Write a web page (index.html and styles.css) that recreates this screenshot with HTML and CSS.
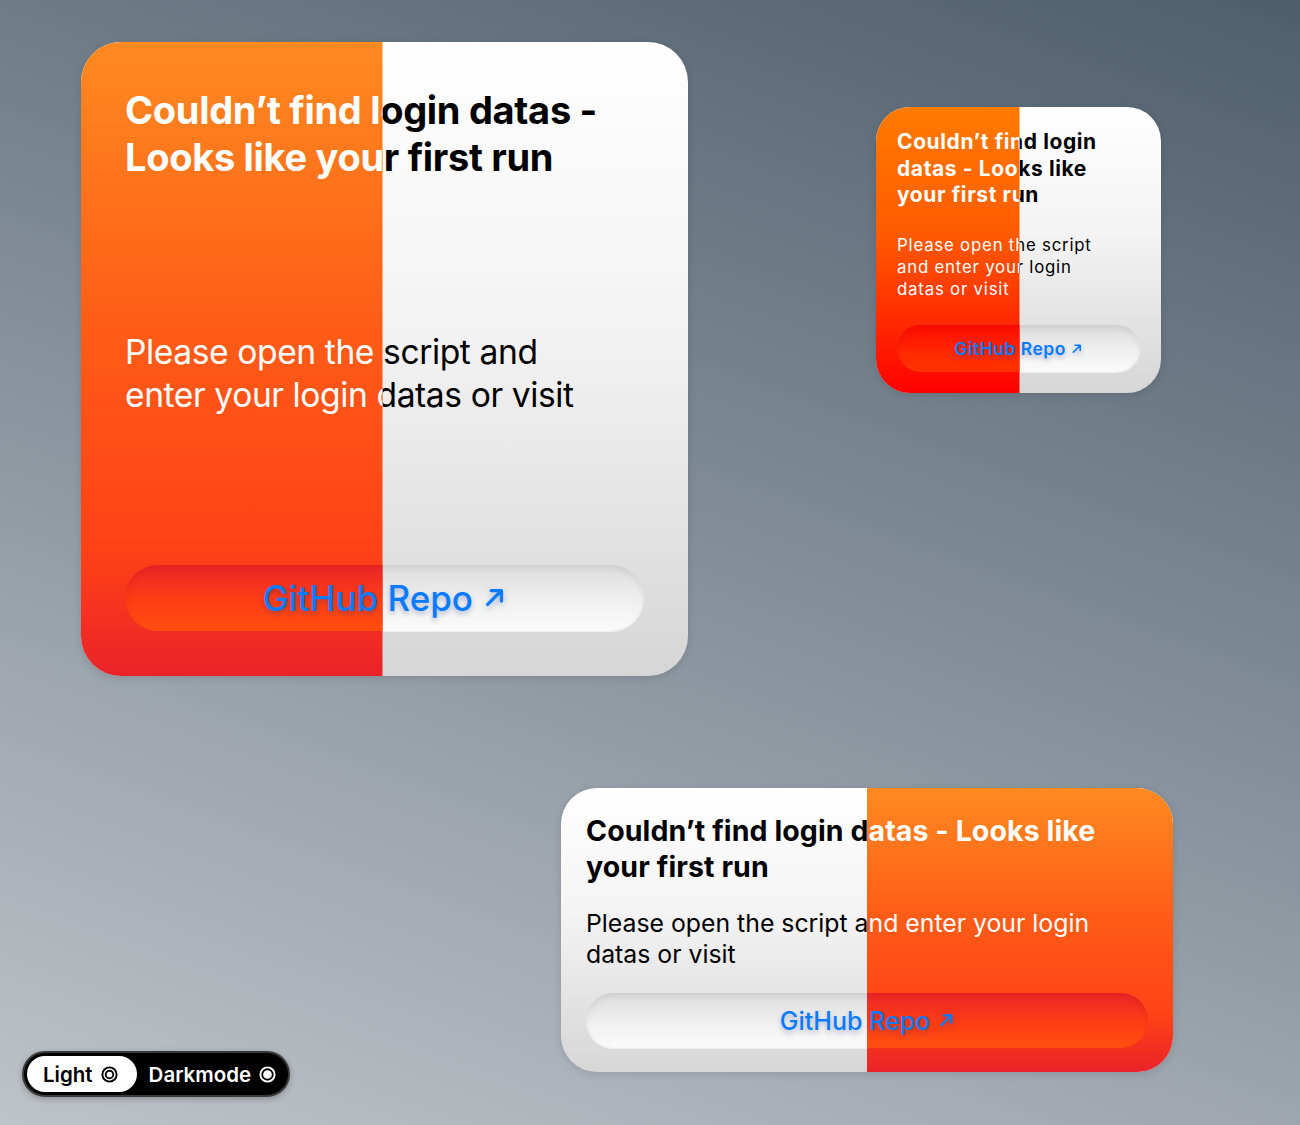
FILE: index.html
```html
<!DOCTYPE html>
<html lang="en">
<head>
<meta charset="utf-8">
<title>Widget preview</title>
<link rel="stylesheet" href="styles.css">
</head>
<body>
<div class="canvas">
  <div class="row row-top">
    <div class="widget widget-lg split-left">
      <div class="face face-light">
        <h1 class="title">Couldn’t find login datas - Looks like your first run</h1>
        <p class="body">Please open the script and enter your login datas or visit</p>
        <div class="btn"><span class="btn-label">GitHub Repo <svg class="arrow" viewBox="0 0 20 20"><path d="M4 16 L16 4 M7 4 H16 V13"/></svg></span></div>
      </div>
      <div class="face face-dark">
        <h1 class="title">Couldn’t find login datas - Looks like your first run</h1>
        <p class="body">Please open the script and enter your login datas or visit</p>
        <div class="btn"><span class="btn-label">GitHub Repo <svg class="arrow" viewBox="0 0 20 20"><path d="M4 16 L16 4 M7 4 H16 V13"/></svg></span></div>
      </div>
    </div>
    <div class="widget widget-sm split-left">
      <div class="face face-light">
        <h1 class="title">Couldn’t find login datas - Looks like your first run</h1>
        <p class="body">Please open the script and enter your login datas or visit</p>
        <div class="btn"><span class="btn-label">GitHub Repo <svg class="arrow" viewBox="0 0 20 20"><path d="M4 16 L16 4 M7 4 H16 V13"/></svg></span></div>
      </div>
      <div class="face face-dark">
        <h1 class="title">Couldn’t find login datas - Looks like your first run</h1>
        <p class="body">Please open the script and enter your login datas or visit</p>
        <div class="btn"><span class="btn-label">GitHub Repo <svg class="arrow" viewBox="0 0 20 20"><path d="M4 16 L16 4 M7 4 H16 V13"/></svg></span></div>
      </div>
    </div>
  </div>
  <div class="row row-bottom">
    <div class="toggle">
      <span class="toggle-opt toggle-opt-active">Light <svg class="mode-icon" viewBox="0 0 20 20"><circle cx="10" cy="10" r="7.5" class="ring"/><circle cx="10" cy="10" r="4" class="ring"/></svg></span>
      <span class="toggle-opt">Darkmode <svg class="mode-icon" viewBox="0 0 20 20"><circle cx="10" cy="10" r="7.5" class="ring"/><circle cx="10" cy="10" r="4.6" class="dot"/></svg></span>
    </div>
    <div class="widget widget-md split-right">
      <div class="face face-light">
        <h1 class="title">Couldn’t find login datas - Looks like your first run</h1>
        <p class="body">Please open the script and enter your login datas or visit</p>
        <div class="btn"><span class="btn-label">GitHub Repo <svg class="arrow" viewBox="0 0 20 20"><path d="M4 16 L16 4 M7 4 H16 V13"/></svg></span></div>
      </div>
      <div class="face face-dark">
        <h1 class="title">Couldn’t find login datas - Looks like your first run</h1>
        <p class="body">Please open the script and enter your login datas or visit</p>
        <div class="btn"><span class="btn-label">GitHub Repo <svg class="arrow" viewBox="0 0 20 20"><path d="M4 16 L16 4 M7 4 H16 V13"/></svg></span></div>
      </div>
    </div>
  </div>
</div>
</body>
</html>
```

FILE: styles.css
```css
html, body {
  margin: 0;
  padding: 0;
}
body {
  width: 1300px;
  height: 1125px;
  overflow: hidden;
  font-family: Inter, "Noto Sans", "Liberation Sans", sans-serif;
  background: linear-gradient(200deg, #4f5e6d 0%, #7a8691 40%, #a3aab2 75%, #bec3c8 100%);
}
.canvas {
  display: flex;
  flex-direction: column;
  padding-top: 42px;
}
.row {
  display: flex;
}
.row-top {
  align-items: flex-start;
}
.row-bottom {
  align-items: flex-end;
  margin-top: 112px;
}

/* ---------- widget ---------- */
.widget {
  display: grid;
  overflow: hidden;
  box-shadow: 0 2px 8px rgba(0, 0, 0, 0.12);
}
.face {
  grid-area: 1 / 1;
  display: flex;
  flex-direction: column;
  justify-content: space-between;
  box-sizing: border-box;
}
.split-left .face-dark { clip-path: inset(0 50% 0 0); }
.split-right .face-dark { clip-path: inset(0 0 0 50%); }
.widget-lg .face-dark { clip-path: inset(0 calc(50% + 2px) 0 0); }
.widget-sm .face-dark { clip-path: inset(0 calc(50% - 1px) 0 0); }

.face-light {
  background: linear-gradient(180deg, #ffffff 0%, #f3f3f3 45%, #d6d6d6 100%);
  color: #000;
}
.face-dark {
  background: linear-gradient(180deg, #ff8a20 0%, #ff5c17 45%, #ff4216 80%, #ea2229 100%);
  color: #fff;
}
.title {
  margin: 0;
  font-weight: 700;
}
.body {
  margin: 0;
  font-weight: 400;
}
.btn {
  display: flex;
  align-items: center;
  justify-content: center;
  border-radius: 999px;
}
.face-light .btn {
  background: linear-gradient(180deg, #dcdcdc 0%, #f0f0f0 55%, #fbfbfb 100%);
  box-shadow: inset 0 3px 6px rgba(0, 0, 0, 0.07), 0 1px 0 rgba(255, 255, 255, 0.6);
}
.face-dark .btn {
  background: linear-gradient(180deg, #eb2628 0%, #ff3d14 55%, #ff4f10 100%);
  box-shadow: inset 0 3px 6px rgba(150, 0, 0, 0.12);
}
.btn-label {
  color: #0a7aff;
  font-weight: 500;
  display: inline-flex;
  align-items: center;
  gap: 0.3em;
  text-shadow: 0 3px 5px rgba(0, 40, 120, 0.28);
}
.arrow {
  width: 0.66em;
  height: 0.66em;
  fill: none;
  stroke: currentColor;
  stroke-width: 2.8;
  stroke-linecap: round;
  stroke-linejoin: round;
  filter: drop-shadow(0 3px 3px rgba(0, 40, 120, 0.28));
}

/* large */
.widget-lg {
  width: 607px;
  height: 634px;
  margin-left: 81px;
  border-radius: 40px;
}
.widget-lg .face {
  padding: 45px 44px 45px 44px;
}
.widget-lg .title {
  font-size: 38px;
  line-height: 47px;
  letter-spacing: -0.3px;
}
.widget-lg .body {
  font-size: 33.6px;
  line-height: 43px;
  letter-spacing: -0.4px;
  max-width: 470px;
}
.widget-lg .btn {
  height: 66px;
}
.widget-lg .btn-label {
  font-size: 35px;
}

/* small */
.widget-sm {
  width: 285px;
  height: 286px;
  margin-left: 188px;
  margin-top: 65px;
  border-radius: 34px;
}
.widget-sm .face-dark {
  background: linear-gradient(180deg, #ff7b00 0%, #ff5a00 45%, #ff2a00 75%, #ff0000 100%);
}
.widget-sm .face-dark .btn {
  background: linear-gradient(180deg, #ff0a00 0%, #ff2a00 60%, #ff3300 100%);
}
.widget-sm .face {
  padding: 22px 21px 21px 21px;
}
.widget-sm .title {
  font-size: 21px;
  line-height: 26.5px;
  letter-spacing: 0.6px;
  max-width: 222px;
}
.widget-sm .body {
  font-size: 16.8px;
  line-height: 22px;
  letter-spacing: 0.8px;
  max-width: 222px;
}
.widget-sm .btn {
  height: 47px;
}
.widget-sm .btn-label {
  font-size: 17.5px;
  font-weight: 600;
  letter-spacing: 0.5px;
}

/* medium */
.widget-md {
  width: 612px;
  height: 284px;
  margin-left: 271px;
  margin-bottom: 53px;
  border-radius: 36px;
}
.widget-md .face {
  padding: 25px 25px 24px 25px;
}
.widget-md .title {
  font-size: 28.5px;
  line-height: 36px;
  letter-spacing: 0.1px;
  max-width: 548px;
}
.widget-md .body {
  font-size: 24.8px;
  line-height: 31px;
  max-width: 540px;
}
.widget-md .btn {
  height: 55px;
}
.widget-md .btn-label {
  font-size: 25px;
}

/* toggle */
.toggle {
  display: flex;
  align-items: center;
  box-sizing: border-box;
  width: 268px;
  height: 46px;
  margin-left: 22px;
  margin-bottom: 28px;
  padding: 3px;
  background: #000;
  border: 2px solid #3a3a3a;
  border-radius: 999px;
  box-shadow: 0 2px 6px rgba(0, 0, 0, 0.25);
}
.toggle-opt {
  display: inline-flex;
  align-items: center;
  gap: 7px;
  height: 100%;
  padding: 0 16px 0 12px;
  border-radius: 999px;
  color: #fff;
  font-size: 20.5px;
  font-weight: 600;
}
.toggle-opt-active {
  background: #fff;
  color: #000;
  padding: 0 18px 0 16px;
}
.mode-icon {
  width: 19px;
  height: 19px;
}
.mode-icon .ring {
  fill: none;
  stroke: currentColor;
  stroke-width: 2;
}
.mode-icon .dot {
  fill: currentColor;
}
```
